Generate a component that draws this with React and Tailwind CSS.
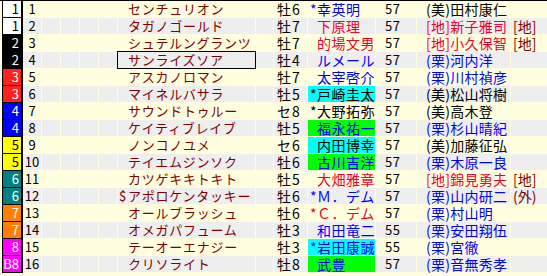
const WAKU = {
  '1': 'bg-white text-black',
  '2': 'bg-black text-white',
  '3': 'bg-[#ff2020] text-white',
  '4': 'bg-[#0000ff] text-white',
  '5': 'bg-[#ffff00] text-black',
  '6': 'bg-[#008080] text-white',
  '7': 'bg-[#ff8000] text-white',
  '8': 'bg-[#ff00ff] text-white',
  'B8': 'bg-[#ff00ff] text-white',
}

const INK = {
  blue: 'text-[#0000ff]',
  red: 'text-[#f00030]',
  black: 'text-black',
}

const HL = {
  cyan: 'bg-[#00ffff]',
  green: 'bg-[#00ff00]',
}

const runners = [
  { waku: '1', no: 1, name: 'センチュリオン', sa: '牡6', mark: '*', jockey: '幸英明', jc: 'blue', wt: 57, tr: '(美)田村康仁', tc: 'black' },
  { waku: '1', no: 2, name: 'タガノゴールド', sa: '牡7', jockey: '下原理', jc: 'red', wt: 57, tr: '[地]新子雅司', tc: 'red', note: '[地]' },
  { waku: '2', no: 3, name: 'シュテルングランツ', sa: '牡7', jockey: '的場文男', jc: 'red', wt: 57, tr: '[地]小久保智', tc: 'red', note: '[地]' },
  { waku: '2', no: 4, name: 'サンライズソア', sa: '牡4', jockey: 'ルメール', jc: 'blue', wt: 57, tr: '(栗)河内洋', tc: 'blue', selected: true },
  { waku: '3', no: 5, name: 'アスカノロマン', sa: '牡7', jockey: '太宰啓介', jc: 'blue', wt: 57, tr: '(栗)川村禎彦', tc: 'blue' },
  { waku: '3', no: 6, name: 'マイネルバサラ', sa: '牡5', mark: '*', jockey: '戸崎圭太', jc: 'black', hl: 'cyan', wt: 57, tr: '(美)松山将樹', tc: 'black' },
  { waku: '4', no: 7, name: 'サウンドトゥルー', sa: 'セ8', mark: '*', jockey: '大野拓弥', jc: 'black', wt: 57, tr: '(美)高木登', tc: 'black' },
  { waku: '4', no: 8, name: 'ケイティブレイブ', sa: '牡5', jockey: '福永祐一', jc: 'blue', hl: 'green', wt: 57, tr: '(栗)杉山晴紀', tc: 'blue' },
  { waku: '5', no: 9, name: 'ノンコノユメ', sa: 'セ6', jockey: '内田博幸', jc: 'black', hl: 'cyan', wt: 57, tr: '(美)加藤征弘', tc: 'black' },
  { waku: '5', no: 10, name: 'テイエムジンソク', sa: '牡6', jockey: '古川吉洋', jc: 'blue', hl: 'green', wt: 57, tr: '(栗)木原一良', tc: 'blue' },
  { waku: '6', no: 11, name: 'カツゲキキトキト', sa: '牡5', jockey: '大畑雅章', jc: 'red', wt: 57, tr: '[地]錦見勇夫', tc: 'red', note: '[地]' },
  { waku: '6', no: 12, prefix: '$', name: 'アポロケンタッキー', sa: '牡6', mark: '*', jockey: 'Ｍ．デム', jc: 'blue', wt: 57, tr: '(栗)山内研二', tc: 'blue', note: '(外)' },
  { waku: '7', no: 13, name: 'オールブラッシュ', sa: '牡6', mark: '*', jockey: 'Ｃ．デム', jc: 'red', wt: 57, tr: '(栗)村山明', tc: 'blue' },
  { waku: '7', no: 14, name: 'オメガパフューム', sa: '牡3', jockey: '和田竜二', jc: 'blue', wt: 55, tr: '(栗)安田翔伍', tc: 'blue' },
  { waku: '8', no: 15, name: 'テーオーエナジー', sa: '牡3', mark: '*', jockey: '岩田康誠', jc: 'blue', hl: 'cyan', wt: 55, tr: '(栗)宮徹', tc: 'blue' },
  { waku: 'B8', no: 16, name: 'クリソライト', sa: '牡8', jockey: '武豊', jc: 'blue', hl: 'green', wt: 57, tr: '(栗)音無秀孝', tc: 'blue' },
]

function Row({ r, even }) {
  const cell = even ? 'bg-[#eeeeee]' : 'bg-[#ffffe0]'
  return (
    <div className="grid h-4 grid-cols-[20px_18px_18px_18px_18px_18px_137px_17px_33px_67px_40px_93px_1fr] gap-x-px leading-4">
      <div className={`-mr-px -mb-px border-l border-r-2 border-b border-black pr-[2px] text-right text-[13px] ${WAKU[r.waku]}`}>
        {r.waku}
      </div>
      <div className={`${cell} text-center text-[13px]`}>{r.no}</div>
      <div className={cell} />
      <div className={cell} />
      <div className={cell} />
      <div className={cell} />
      <div className={`${cell} whitespace-nowrap pl-px text-[13px] text-[#800000] ${r.selected ? 'outline outline-1 outline-black' : ''}`}>
        <span className="inline-block w-[9px]">{r.prefix}</span>
        <span className="tracking-[0.75px]">{r.name}</span>
      </div>
      <div className={cell} />
      <div className={`${cell} whitespace-nowrap pl-[3px] text-[14px] tracking-[1px]`}>{r.sa}</div>
      <div className={`${r.hl ? HL[r.hl] : cell} overflow-hidden whitespace-nowrap pl-[2px] text-[14px] ${INK[r.jc]}`}>
        <span className="inline-block w-[7px]">{r.mark}</span>
        <span className="tracking-[0.5px]">{r.jockey}</span>
      </div>
      <div className={`${cell} pl-[9px] text-[13px] tracking-[0.5px]`}>{r.wt}</div>
      <div className={`${cell} whitespace-nowrap pl-[9px] text-[14px] tracking-[0.25px] ${INK[r.tc]}`}>
        {r.tr}
      </div>
      <div className={`${cell} whitespace-nowrap pl-[2px] text-[14px] text-[#800000]`}>{r.note}</div>
    </div>
  )
}

export default function App() {
  return (
    <div className="flex h-[276px] w-[547px] flex-col gap-y-px overflow-hidden border-t border-black bg-[#ffffe0] pl-[2px] font-['Noto_Sans_CJK_JP',sans-serif] text-black">
      {runners.map((r, i) => (
        <Row key={r.no} r={r} even={i % 2 === 1} />
      ))}
    </div>
  )
}
